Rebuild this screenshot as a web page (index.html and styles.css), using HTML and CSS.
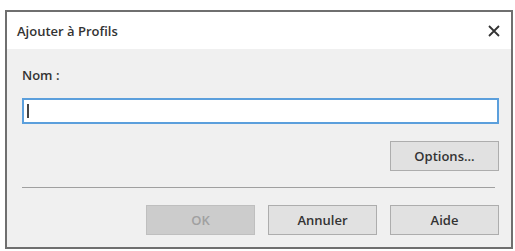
FILE: index.html
```html
<!DOCTYPE html>
<html lang="fr">
<head>
    <meta charset="UTF-8">
    <title>Ajouter à Profils</title>
    <link rel="stylesheet" href="styles.css">
</head>
<body>
    <div class="window">
        <div class="titlebar">
            <span class="title">Ajouter à Profils</span>
            <span class="close">
                <svg width="12" height="12" viewBox="0 0 12 12">
                    <path d="M1 1 L11 11 M11 1 L1 11" stroke="#333" stroke-width="1.8" fill="none"/>
                </svg>
            </span>
        </div>

        <div class="content">
            <div class="label">Nom :</div>
            <div class="input"><span class="caret"></span></div>

            <div class="row">
                <button class="button">Options...</button>
            </div>

            <div class="separator"></div>

            <div class="row buttons">
                <button class="button disabled">OK</button>
                <button class="button">Annuler</button>
                <button class="button">Aide</button>
            </div>
        </div>
    </div>
</body>
</html>
```

FILE: styles.css
```css
* {
    margin: 0;
    padding: 0;
    box-sizing: border-box;
}

body {
    font-family: "Open Sans", "Noto Sans", sans-serif;
    font-size: 13px;
    font-weight: 600;
    color: #333;
    background: #ffffff;
    padding: 10px 0 0 5px;
}

.window {
    width: 508px;
    height: 239px;
    border: 2px solid #6f6f6f;
    background: #f0f0f0;
    display: flex;
    flex-direction: column;
}

.titlebar {
    height: 37px;
    background: #ffffff;
    display: flex;
    align-items: center;
    justify-content: space-between;
    padding: 0 11px 0 10px;
}

.title {
    font-size: 13px;
    color: #333;
}

.close {
    display: flex;
    align-items: center;
}

.content {
    padding: 18px 12px 0 15px;
    display: flex;
    flex-direction: column;
}

.label {
    line-height: 16px;
    height: 16px;
}

.input {
    margin-top: 15px;
    height: 26px;
    background: #ffffff;
    border: 2px solid #5b9fdc;
    display: flex;
    align-items: center;
    padding-left: 3px;
}

.caret {
    width: 2px;
    height: 14px;
    background: #444;
}

.row {
    display: flex;
    justify-content: flex-end;
    margin-top: 17px;
}

.buttons {
    gap: 13px;
}

.button {
    width: 109px;
    height: 30px;
    background: #e1e1e1;
    border: 1px solid #adadad;
    font-family: inherit;
    font-size: 13px;
    font-weight: 600;
    color: #333;
}

.button.disabled {
    background: #cccccc;
    border-color: #bfbfbf;
    color: #a0a0a0;
}

.separator {
    margin-top: 16px;
    margin-right: 4px;
    height: 1px;
    background: #a0a0a0;
}
```
